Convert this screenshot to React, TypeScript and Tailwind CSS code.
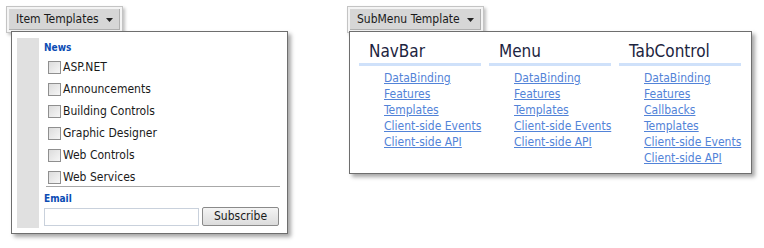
import React from 'react';

const font = { fontFamily: '"DejaVu Sans Condensed", "DejaVu Sans", sans-serif' };

const categories = ['ASP.NET', 'Announcements', 'Building Controls', 'Graphic Designer', 'Web Controls', 'Web Services'];

const columns = [
  { title: 'NavBar', links: ['DataBinding', 'Features', 'Templates', 'Client-side Events', 'Client-side API'] },
  { title: 'Menu', links: ['DataBinding', 'Features', 'Templates', 'Client-side Events', 'Client-side API'] },
  { title: 'TabControl', links: ['DataBinding', 'Features', 'Callbacks', 'Templates', 'Client-side Events', 'Client-side API'] },
];

function MenuButton({ label }: { label: string }) {
  return (
    <div className="inline-flex border border-[#c4c4c4] bg-[#f4f4f4] p-[2px] shadow-[2px_2px_3px_rgba(0,0,0,0.25)]">
      <div className="flex h-[21px] items-center gap-[7px] border-b border-r border-[#b0b0b0] bg-[#d6d6d6] pl-[7px] pr-[6px] text-[12px] text-[#1a1a1a]">
        <span>{label}</span>
        <svg width="7" height="4" viewBox="0 0 7 4" className="mt-[1px]">
          <path d="M0 0h7L3.5 4z" fill="#222" />
        </svg>
      </div>
    </div>
  );
}

function Checkbox() {
  return (
    <span className="block h-[13px] w-[13px] shrink-0 border border-[#8f8f8f] bg-gradient-to-br from-[#dcdcdc] to-[#f6f6f6]" />
  );
}

export default function App() {
  return (
    <div className="flex h-[248px] w-[764px] items-start overflow-hidden bg-white" style={font}>
      <div className="ml-[6px] mt-[6px] flex w-[282px] flex-col items-start">
        <MenuButton label="Item Templates" />
        <div className="relative z-10 ml-[5px] -mt-[2px] flex h-[203px] w-[277px] border border-[#6e6e6e] bg-white px-[5px] pb-[5px] pt-[6px] shadow-[3px_3px_4px_rgba(0,0,0,0.35)]">
          <div className="w-[22px] shrink-0 bg-[#e0e0e0]" />
          <div className="flex flex-1 flex-col pl-[5px] pr-[2px]">
            <div className="mt-[3px] h-[14px] text-[10px] font-bold leading-[14px] text-[#0b4cb4]">News</div>
            <div className="mt-[1px] flex flex-col pl-[4px]">
              {categories.map((c) => (
                <label key={c} className="flex h-[22px] items-center gap-[2px] text-[12px] text-[#1a1a1a]">
                  <Checkbox />
                  <span>{c}</span>
                </label>
              ))}
            </div>
            <div className="ml-[2px] -mt-[2px] h-px bg-[#a8a8a8]" />
            <div className="mt-[5px] h-[13px] text-[10px] font-bold leading-[13px] text-[#0b4cb4]">Email</div>
            <div className="mt-[2px] flex items-center gap-[3px]">
              <div className="h-[18px] w-[155px] border border-[#c9d1dc] bg-white" />
              <button className="h-[19px] w-[77px] rounded-[2px] border border-[#8a8a8a] bg-gradient-to-b from-[#f4f4f4] to-[#dcdcdc] text-[12px] leading-[17px] text-[#1a1a1a]">
                Subscribe
              </button>
            </div>
          </div>
        </div>
      </div>

      <div className="ml-[59px] mt-[6px] flex flex-col items-start">
        <MenuButton label="SubMenu Template" />
        <div className="relative z-10 ml-[2px] -mt-[2px] flex h-[143px] w-[403px] gap-[8px] border border-[#6e6e6e] bg-white px-[9px] pt-[8px] shadow-[3px_3px_4px_rgba(0,0,0,0.35)]">
          {columns.map((col) => (
            <div key={col.title} className="flex w-[122px] flex-col">
              <div className="h-[23px] pl-[10px] text-[17px] leading-[23px] text-[#1c2440]">{col.title}</div>
              <div className="h-[3px] bg-[#cfe1fa]" />
              <ul className="mt-[4px] flex flex-col pl-[25px]">
                {col.links.map((l, i) => (
                  <li key={i} className="h-[16px] text-[12px] leading-[16px]">
                    <a href="#" className="whitespace-nowrap text-[#5283d8] underline">
                      {l}
                    </a>
                  </li>
                ))}
              </ul>
            </div>
          ))}
        </div>
      </div>
    </div>
  );
}
